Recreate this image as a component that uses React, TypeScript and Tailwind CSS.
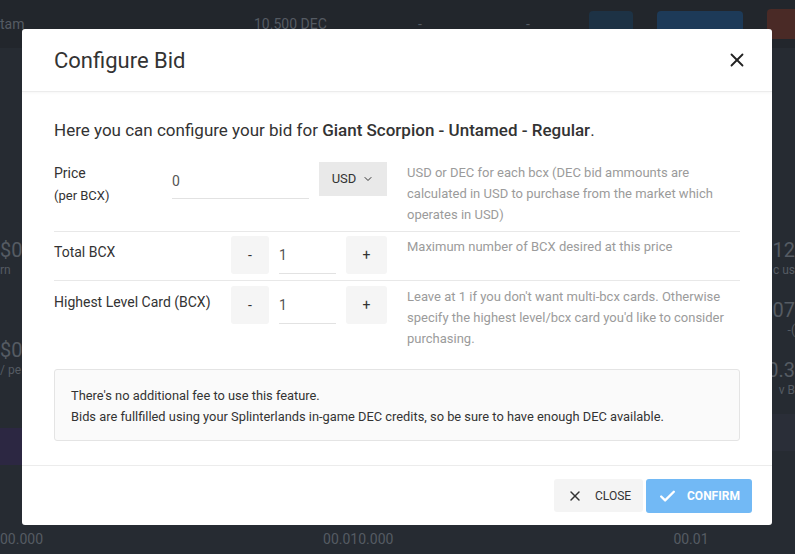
import { Check, ChevronDown, X } from "lucide-react";

const rowsLeft = [
  { big: "$0", small: "rn" },
  { big: "$0", small: "/ pe" },
];

function Backdrop() {
  return (
    <div className="flex h-full flex-col text-[#555b63]">
      <div className="flex h-[48px] items-center gap-6 bg-[#22262c]">
        <span className="w-[40px] text-sm">tam</span>
        <span className="ml-[190px] w-[90px] text-sm">10.500 DEC</span>
        <span className="ml-[50px] text-sm">-</span>
        <span className="ml-[80px] text-sm">-</span>
        <span className="ml-auto h-[26px] w-[44px] rounded bg-[#1d3245]" />
        <span className="h-[26px] w-[86px] rounded bg-[#1d3a58]" />
        <span className="h-[30px] w-[28px] rounded-l bg-[#4a2a26]" />
      </div>
      <div className="flex flex-1 justify-between">
        <div className="flex w-[60px] flex-col pt-[190px]">
          {rowsLeft.map((r) => (
            <div key={r.small} className="mb-[60px]">
              <div className="text-[20px] leading-6">{r.big}</div>
              <div className="text-xs">{r.small}</div>
            </div>
          ))}
          <div className="-mt-[10px] h-[37px] w-[60px] bg-[#2c2742]" />
        </div>
        <div className="flex w-[60px] flex-col items-end pt-[190px]">
          <div className="text-[20px] leading-6">012</div>
          <div className="text-xs">c us</div>
          <div className="mt-[20px] text-[20px] leading-6">0.07</div>
          <div className="text-xs">-(</div>
          <div className="mt-[20px] text-[20px] leading-6">0.3</div>
          <div className="text-xs">v B</div>
          <div className="mt-[16px] h-[37px] w-[60px] bg-[#2a2e38]" />
        </div>
      </div>
      <div className="flex h-[30px] items-center gap-[280px] text-sm">
        <span>00.000</span>
        <span>00.010.000</span>
        <span>00.01</span>
      </div>
    </div>
  );
}

function Stepper() {
  return (
    <div className="flex w-[215px] items-start justify-end gap-[10px]">
      <button className="flex h-[38px] w-[38px] items-center justify-center rounded-[3px] bg-[#f5f5f5] text-sm text-[#333]">
        -
      </button>
      <div className="flex h-[38px] w-[57px] items-center border-b border-[#e2e2e2] text-sm text-[#555]">
        1
      </div>
      <button className="flex h-[38px] w-[41px] items-center justify-center rounded-[3px] bg-[#f5f5f5] text-sm text-[#333]">
        +
      </button>
    </div>
  );
}

export default function App() {
  return (
    <div className="relative h-[554px] w-[795px] overflow-hidden bg-[#262b32] font-['Roboto','Noto_Sans',sans-serif]">
      <Backdrop />

      <div className="absolute inset-0 pl-[22px] pt-[29px]">
        <div className="flex h-[496px] w-[750px] flex-col rounded-[3px] bg-white">
          <div className="flex h-[63px] items-center justify-between border-b border-[#ececec] pl-8 pr-6 shadow-[0_1px_3px_rgba(0,0,0,0.04)]">
            <h2 className="text-[22px] text-[#333]">Configure Bid</h2>
            <X className="h-[22px] w-[22px] text-[#222]" strokeWidth={2} />
          </div>

          <div className="flex-1 px-8 pt-[26px]">
            <p className="text-[17px] leading-6 text-[#333]">
              Here you can configure your bid for{" "}
              <span className="font-medium">Giant Scorpion - Untamed - Regular</span>.
            </p>

            <div className="mt-5 flex items-start border-b border-[#e8e8e8] pb-[6px]">
              <div className="w-[118px] text-[#333]">
                <div className="text-sm leading-[22px]">Price</div>
                <div className="text-[13px] leading-[23px]">(per BCX)</div>
              </div>
              <div className="flex w-[215px] items-start gap-[10px]">
                <div className="mt-[1px] flex h-[36px] w-[137px] items-center border-b border-[#e2e2e2] text-sm text-[#555]">
                  0
                </div>
                <button className="flex h-[34px] w-[68px] items-center justify-center gap-[6px] bg-[#e9e9e9] text-[13px] text-[#333]">
                  USD
                  <ChevronDown className="h-3 w-3" strokeWidth={2} />
                </button>
              </div>
              <p className="ml-5 flex-1 text-[13px] leading-[21px] text-[#9b9b9b]">
                USD or DEC for each bcx (DEC bid ammounts are calculated in USD to purchase
                from the market which operates in USD)
              </p>
            </div>

            <div className="flex items-start border-b border-[#e8e8e8] pt-1 pb-[6px]">
              <div className="w-[118px] pt-[5px] text-sm leading-[22px] text-[#333]">Total BCX</div>
              <Stepper />
              <p className="ml-5 flex-1 text-[13px] leading-[21px] text-[#9b9b9b]">
                Maximum number of BCX desired at this price
              </p>
            </div>

            <div className="flex items-start pt-[5px]">
              <div className="w-[118px] whitespace-nowrap pt-[5px] text-sm leading-[22px] text-[#333]">
                Highest Level Card (BCX)
              </div>
              <Stepper />
              <p className="ml-5 flex-1 text-[13px] leading-[21px] text-[#9b9b9b]">
                Leave at 1 if you don't want multi-bcx cards. Otherwise specify the highest
                level/bcx card you'd like to consider purchasing.
              </p>
            </div>

            <div className="mt-5 h-[72px] rounded-[3px] border border-[#e4e4e4] bg-[#fafafa] px-4 pt-[15px] text-[12.85px] leading-[21px] text-[#333]">
              <p>There's no additional fee to use this feature.</p>
              <p>
                Bids are fullfilled using your Splinterlands in-game DEC credits, so be sure to
                have enough DEC available.
              </p>
            </div>
          </div>

          <div className="flex h-[60px] items-start justify-end gap-[3px] border-t border-[#ececec] pr-5 pt-[13px]">
            <button className="flex h-[33px] w-[89px] items-center gap-3 rounded-[3px] bg-[#f4f4f4] pl-[13px] text-[12px] uppercase text-[#333]">
              <X className="h-[16px] w-[16px]" strokeWidth={2.2} />
              Close
            </button>
            <button className="flex h-[34px] w-[106px] items-center gap-[10px] rounded-[3px] bg-[#72b9f5] pl-[12px] text-[12px] font-bold uppercase text-white">
              <Check className="h-[19px] w-[19px]" strokeWidth={3} />
              Confirm
            </button>
          </div>
        </div>
      </div>
    </div>
  );
}
